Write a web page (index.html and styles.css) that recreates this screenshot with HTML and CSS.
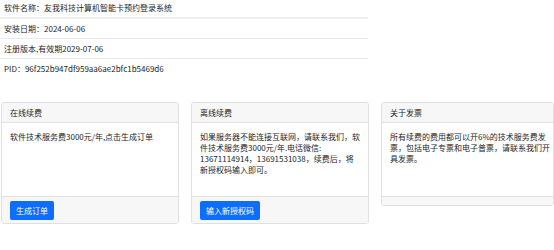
FILE: index.html
```html
<!DOCTYPE html>
<html lang="zh-CN">
<head>
<meta charset="utf-8">
<title>软件信息</title>
<link rel="stylesheet" href="styles.css">
</head>
<body>
<div class="info">
  <div class="info-row first">软件名称：友我科技计算机智能卡预约登录系统</div>
  <div class="info-row">安装日期：2024-06-06</div>
  <div class="info-row">注册版本,有效期2029-07-06</div>
  <div class="info-row last">PID：96f252b947df959aa6ae2bfc1b5469d6</div>
</div>
<div class="cards">
  <div class="card">
    <div class="card-header">在线续费</div>
    <div class="card-body">软件技术服务费3000元/年,点击生成订单</div>
    <div class="card-footer"><button class="btn">生成订单</button></div>
  </div>
  <div class="card">
    <div class="card-header">离线续费</div>
    <div class="card-body">如果服务器不能连接互联网，请联系我们，软<br>件技术服务费3000元/年.电话微信:<br>13671114914，13691531038，续费后，将<br>新授权码输入即可。</div>
    <div class="card-footer"><button class="btn">输入新授权码</button></div>
  </div>
  <div class="card narrow">
    <div class="card-header">关于发票</div>
    <div class="card-body">所有续费的费用都可以开6%的技术服务费发<br>票，包括电子专票和电子普票，请联系我们开<br>具发票。</div>
    <div class="card-footer"></div>
  </div>
</div>
</body>
</html>
```
FILE: styles.css
```css
html, body {
  margin: 0;
  padding: 0;
  background: #fff;
  overflow: hidden;
}
body {
  font-family: "Noto Sans CJK SC", "Noto Sans", sans-serif;
  font-size: 8px;
  line-height: 11px;
  color: #212529;
}
.info {
  width: 368px;
}
.info-row {
  padding: 4px 4px;
  border-bottom: 1px solid #e9e9e9;
}
.info-row.first {
  padding-top: 2px;
  border-bottom: 2px solid #f0f0f0;
}
.info-row.last {
  border-bottom: none;
}
.cards {
  display: grid;
  grid-template-columns: 178px 178px 173px;
  column-gap: 12px;
  align-items: start;
  margin-top: 24px;
  padding-left: 1px;
}
.card {
  border: 1px solid #e0e0e0;
  border-radius: 3px;
  overflow: hidden;
  background: #fff;
}
.card-header {
  background: #f7f7f7;
  padding: 4px 8px;
  border-bottom: 1px solid #e0e0e0;
}
.card-body {
  height: 57px;
  padding: 8px 8px;
  white-space: nowrap;
}
.card-footer {
  background: #f7f7f7;
  border-top: 1px solid #e0e0e0;
  padding: 4px 8px 3px;
  min-height: 1px;
}
.btn {
  display: block;
  font-family: inherit;
  font-size: 8px;
  line-height: 11px;
  height: 19px;
  padding: 0 6px;
  margin: 0;
  border: none;
  border-radius: 2px;
  background: #0d6efd;
  color: #fff;
}
```
